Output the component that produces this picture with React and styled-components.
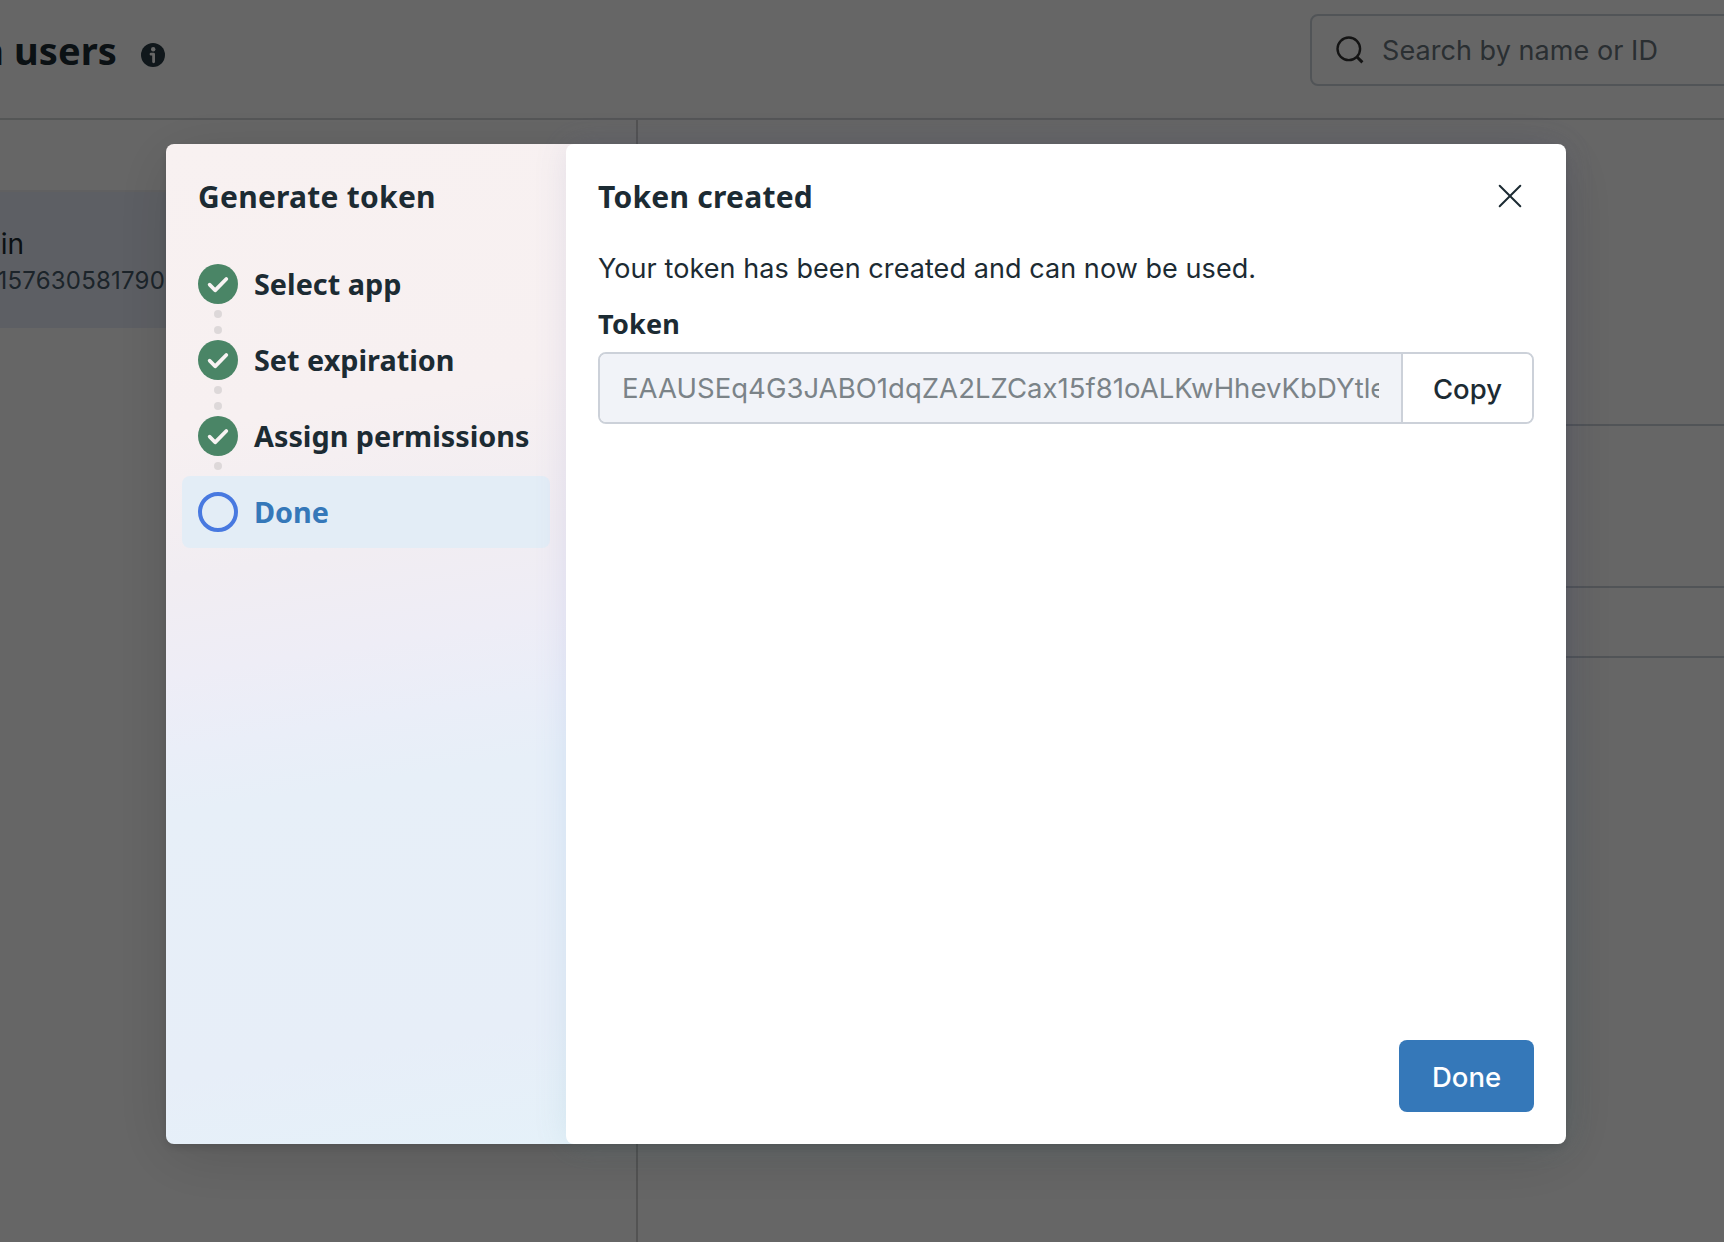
import React from "react"
import styled, { createGlobalStyle } from "styled-components"

const GlobalStyle = createGlobalStyle`
  * {
    box-sizing: border-box;
  }
  body {
    margin: 0;
    background: #ffffff;
    color: #1c2b33;
    font-family: Inter, sans-serif;
    overflow: hidden;
  }
  h1, h2, p {
    margin: 0;
  }
`

const Page = styled.div`
  display: flex;
  flex-direction: column;
  width: 100%;
  height: 100vh;
  overflow: hidden;
`

const Header = styled.header`
  display: flex;
  align-items: flex-start;
  height: 120px;
  border-bottom: 2px solid #d3d6d8;
`

const PageTitle = styled.h1`
  display: flex;
  justify-content: flex-end;
  flex: none;
  width: 117px;
  padding-top: 28px;
  overflow: hidden;
  font-family: "Noto Sans", sans-serif;
  font-size: 38px;
  font-weight: 700;
  line-height: 45px;
  letter-spacing: 0.1px;
  white-space: nowrap;
`

const InfoIcon = styled.svg`
  flex: none;
  width: 24px;
  height: 24px;
  margin: 43px 0 0 24px;
`

const SearchBox = styled.div`
  display: flex;
  align-items: center;
  flex: none;
  width: 440px;
  height: 72px;
  margin: 14px -26px 0 auto;
  padding-left: 22px;
  border: 2px solid #cbd2d9;
  border-radius: 8px;
  color: #6a757d;
  font-size: 27px;
  letter-spacing: 0.06px;
  svg {
    width: 32px;
    height: 32px;
    margin-right: 16px;
  }
`

const Columns = styled.main`
  display: flex;
  flex: 1;
`

const UserList = styled.div`
  flex: none;
  width: 638px;
  padding-top: 70px;
  border-right: 2px solid #cfcfcf;
`

const UserRow = styled.div`
  height: 138px;
  padding-top: 34px;
  border-top: 2px solid #f0f0f2;
  background: #e9eefa;
`

const UserText = styled.div`
  display: flex;
  justify-content: flex-end;
  width: ${props => props.$width}px;
  overflow: hidden;
  color: ${props => (props.$muted ? "#465a69" : "#1c2b33")};
  font-size: ${props => (props.$muted ? 24 : 28)}px;
  letter-spacing: ${props => (props.$muted ? 0.2 : 0)}px;
  line-height: ${props => (props.$muted ? 38 : 36)}px;
  white-space: nowrap;
`

const Details = styled.div`
  flex: 1;
`

const DetailRow = styled.div`
  height: ${props => props.$height}px;
  border-bottom: 2px solid #cbd2d9;
`

const Overlay = styled.div`
  position: fixed;
  inset: 0;
  padding: 144px 0 0 166px;
  background: rgba(0, 0, 0, 0.6);
`

const Modal = styled.section`
  position: relative;
  display: flex;
  isolation: isolate;
  width: 1400px;
  height: 1000px;
  border-radius: 8px;
  box-shadow: 0 4px 8px rgba(0, 0, 0, 0.12), 0 12px 64px rgba(0, 0, 0, 0.14);
`

const Sidebar = styled.aside`
  position: relative;
  z-index: -2;
  flex: none;
  width: 408px;
  margin-right: -8px;
  padding: 31px 24px 32px 16px;
  border-radius: 8px 0 0 8px;
  background: linear-gradient(
    171deg,
    #f8f1f1 0%,
    #f7f0f1 27%,
    #f1edf2 41%,
    #eeedf6 50%,
    #eaeef8 57%,
    #e7eff8 63%,
    #e7eef8 88%,
    #e5f1f9 100%
  );
`

const Heading = styled.h2`
  font-family: "Noto Sans", sans-serif;
  font-size: 30px;
  font-weight: 700;
  line-height: 44px;
  letter-spacing: 0.25px;
  white-space: nowrap;
`

const SidebarHeading = styled(Heading)`
  padding-left: 16px;
`

const Steps = styled.div`
  display: flex;
  flex-direction: column;
  gap: 4px;
  margin-top: 29px;
`

const Step = styled.div`
  display: flex;
  align-items: center;
  gap: 16px;
  height: 72px;
  padding-left: 16px;
  border-radius: 8px;
  background: ${props => (props.$active ? "#e3edf6" : "transparent")};
  color: ${props => (props.$active ? "#3578b9" : "#1c2b33")};
  font-family: "Noto Sans", sans-serif;
  font-size: 28.8px;
  font-weight: 700;
  line-height: 38px;
  white-space: nowrap;
`

const Marker = styled.div`
  position: relative;
  flex: none;
  width: 40px;
  height: 40px;
  border: ${props => (props.$active ? "4px solid #4879e0" : "none")};
  border-radius: 50%;
  background: ${props => (props.$active ? "transparent" : "#4a8566")};
  svg {
    display: block;
  }
`

// Dots that hang below a marker and lead to the next one
const Trail = styled.div`
  position: absolute;
  top: 46px;
  left: 16px;
  display: flex;
  flex-direction: column;
  gap: 8px;
`

const Dot = styled.i`
  width: 8px;
  height: 8px;
  border-radius: 50%;
  background: #ddd8d9;
`

const Panel = styled.div`
  display: flex;
  flex-direction: column;
  flex: 1;
  min-width: 0;
  padding: 31px 32px 32px;
  border-radius: 8px;
  background: #ffffff;
`

// Tinted glow around the white panel
const Glow = styled.div`
  position: absolute;
  z-index: -1;
  inset: 0 0 0 400px;
  border-radius: 8px;
  background: linear-gradient(
    180deg,
    #50559a 0%,
    #4f52b4 40%,
    #4a58b8 50%,
    #2a72c8 64%,
    #3a86a8 90%,
    #3a8a9c 100%
  );
  filter: blur(17px);
  opacity: 0.12;
`

const PanelHeader = styled.div`
  display: flex;
  align-items: flex-start;
  justify-content: space-between;
`

const CloseButton = styled.button`
  display: flex;
  align-items: flex-start;
  justify-content: center;
  width: 48px;
  height: 44px;
  padding: 9px 0 0;
  border: 0;
  background: none;
  color: #1c2b33;
`

const Message = styled.p`
  margin-top: 32px;
  font-size: 27px;
  line-height: 36px;
  letter-spacing: 0.07px;
  white-space: nowrap;
`

const Label = styled.label`
  margin-top: 19px;
  font-family: "Noto Sans", sans-serif;
  font-size: 27px;
  font-weight: 700;
  line-height: 36px;
  letter-spacing: 0.2px;
`

const Field = styled.div`
  display: flex;
  height: 72px;
  margin-top: 10px;
  border: 2px solid #ccd1d9;
  border-radius: 8px;
  overflow: hidden;
`

const TokenBox = styled.div`
  flex: 1;
  min-width: 0;
  padding: 0 22px;
  background: #f1f3f8;
  color: #7b8388;
  font-size: 27.5px;
  line-height: 68px;
  letter-spacing: 0.04px;
  span {
    display: block;
    overflow: hidden;
    white-space: nowrap;
  }
`

const CopyButton = styled.button`
  flex: none;
  width: 131px;
  padding: 2px 0 0;
  border: 0;
  border-left: 2px solid #ccd1d9;
  background: #ffffff;
  color: #1c2b33;
  font-family: Inter, sans-serif;
  font-size: 27.5px;
  font-weight: 500;
`

const Footer = styled.div`
  display: flex;
  justify-content: flex-end;
  margin-top: auto;
`

const DoneButton = styled.button`
  width: 135px;
  height: 72px;
  padding: 2px 0 0;
  border: 0;
  border-radius: 8px;
  background: #3578b9;
  color: #ffffff;
  font-family: Inter, sans-serif;
  font-size: 27.5px;
  font-weight: 500;
`

const steps = [
  { label: "Select app", dots: 2 },
  { label: "Set expiration", dots: 2 },
  { label: "Assign permissions", dots: 1 },
  { label: "Done", dots: 0, active: true },
]

const Check = () => (
  <svg width="40" height="40" viewBox="0 0 40 40" fill="none">
    <path
      d="M11.7 20.7l5.4 5.6L28.3 15"
      stroke="#f8f3f3"
      strokeWidth="3.8"
      strokeLinecap="round"
      strokeLinejoin="round"
    />
  </svg>
)

const App = () => (
  <>
    <GlobalStyle />
    <Page>
      <Header>
        <PageTitle>n users</PageTitle>
        <InfoIcon viewBox="0 0 24 24">
          <circle cx="12" cy="12" r="12" fill="#283a44" />
          <circle cx="12.2" cy="6.2" r="2.2" fill="#ffffff" />
          <path
            d="M10 11.2h2.6v7.6"
            fill="none"
            stroke="#ffffff"
            strokeWidth="2.8"
            strokeLinecap="round"
            strokeLinejoin="round"
          />
        </InfoIcon>
        <SearchBox>
          <svg viewBox="0 0 32 32" fill="none" stroke="#333333" strokeWidth="2.4">
            <circle cx="14.8" cy="14.8" r="11.3" />
            <path d="M22.8 22.8l5.6 5.6" strokeWidth="3" />
          </svg>
          <span>Search by name or ID</span>
        </SearchBox>
      </Header>
      <Columns>
        <UserList>
          <UserRow>
            <UserText $width={24}>in</UserText>
            <UserText $width={165} $muted>
              157630581790
            </UserText>
          </UserRow>
        </UserList>
        <Details>
          <DetailRow $height={306} />
          <DetailRow $height={162} />
          <DetailRow $height={70} />
        </Details>
      </Columns>
    </Page>
    <Overlay>
      <Modal>
        <Sidebar>
          <SidebarHeading>Generate token</SidebarHeading>
          <Steps>
            {steps.map(step => (
              <Step key={step.label} $active={step.active}>
                <Marker $active={step.active}>
                  {!step.active && <Check />}
                  <Trail>
                    {Array.from({ length: step.dots }, (_, i) => (
                      <Dot key={i} />
                    ))}
                  </Trail>
                </Marker>
                <span>{step.label}</span>
              </Step>
            ))}
          </Steps>
        </Sidebar>
        <Glow />
        <Panel>
          <PanelHeader>
            <Heading>Token created</Heading>
            <CloseButton aria-label="Close">
              <svg width="24" height="24" viewBox="0 0 24 24" fill="none">
                <path
                  d="M1.7 1.7l20.6 20.6M22.3 1.7L1.7 22.3"
                  stroke="currentColor"
                  strokeWidth="2"
                  strokeLinecap="round"
                />
              </svg>
            </CloseButton>
          </PanelHeader>
          <Message>Your token has been created and can now be used.</Message>
          <Label>Token</Label>
          <Field>
            <TokenBox>
              <span>EAAUSEq4G3JABO1dqZA2LZCax15f81oALKwHhevKbDYtle</span>
            </TokenBox>
            <CopyButton>Copy</CopyButton>
          </Field>
          <Footer>
            <DoneButton>Done</DoneButton>
          </Footer>
        </Panel>
      </Modal>
    </Overlay>
  </>
)

export default App
